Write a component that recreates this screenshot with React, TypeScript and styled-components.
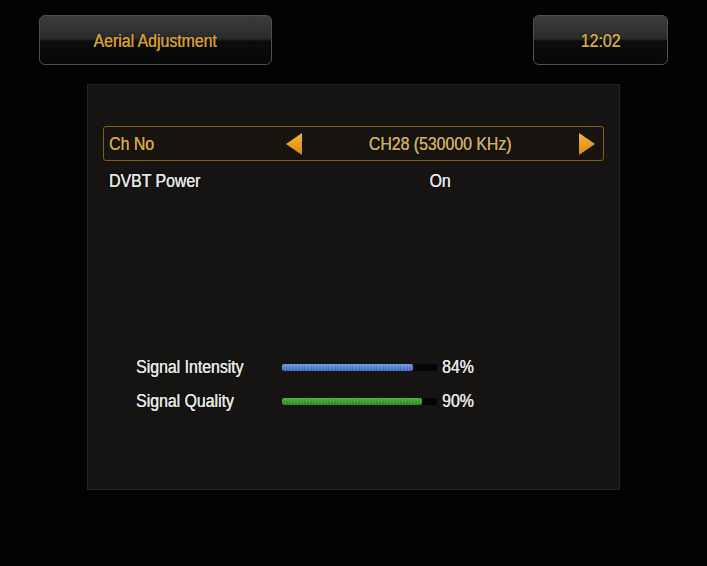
import styled, { createGlobalStyle } from "styled-components";

const GlobalStyle = createGlobalStyle`
  html, body {
    margin: 0;
    padding: 0;
    background: #000;
  }
  body {
    font-family: "Liberation Sans", Arial, sans-serif;
  }
`;

const Screen = styled.div`
  width: 707px;
  height: 566px;
  background: #020202;
  display: flex;
  flex-direction: column;
  overflow: hidden;
`;

const Header = styled.div`
  display: flex;
  justify-content: space-between;
  padding: 15px 39px 0 39px;
`;

const GlossButton = styled.div<{ $w: number }>`
  width: ${(p) => p.$w}px;
  height: 50px;
  box-sizing: border-box;
  border: 1px solid #4f4f4f;
  border-radius: 6px;
  background: linear-gradient(
    to bottom,
    #3c3c3c 0%,
    #2a2a2a 48%,
    #0c0c0c 52%,
    #070707 100%
  );
  display: flex;
  align-items: center;
  justify-content: center;
  padding-top: 2px;
`;

const Txt = styled.span<{ $color?: string; $origin?: string }>`
  display: inline-block;
  font-size: 18px;
  line-height: 20px;
  white-space: nowrap;
  color: ${(p) => p.$color || "#e6e6e6"};
  transform: scaleX(0.88);
  transform-origin: ${(p) => p.$origin || "left center"};
  text-shadow: 0.4px 0 0 ${(p) => p.$color || "#e6e6e6"}, 0 0 2px rgba(0, 0, 0, 0.9);
`;

const Panel = styled.div`
  margin: 19px 0 0 87px;
  width: 533px;
  height: 406px;
  box-sizing: border-box;
  background: #151412;
  border: 1px solid #232220;
  padding: 41px 15px 0 15px;
  display: flex;
  flex-direction: column;
`;

const OptionRow = styled.div<{ $active?: boolean }>`
  height: 35px;
  box-sizing: border-box;
  border: 1px solid ${(p) => (p.$active ? "#7d5d1c" : "transparent")};
  border-radius: 3px;
  background: ${(p) => (p.$active ? "#17140f" : "transparent")};
  display: grid;
  grid-template-columns: 176px 18px 1fr 18px;
  align-items: center;
  padding: ${(p) => (p.$active ? "0" : "4px")} 7px 0 5px;
`;

const Cell = styled.div`
  display: flex;
  justify-content: center;
`;

const Arrow = styled.svg`
  width: 18px;
  height: 22px;
  display: block;
`;

const SignalBlock = styled.div`
  margin-top: 154px;
  padding-left: 33px;
  display: flex;
  flex-direction: column;
`;

const SignalRow = styled.div`
  height: 34px;
  display: grid;
  grid-template-columns: 141px 155px auto;
  column-gap: 5px;
  align-items: center;
`;

const Track = styled.div`
  height: 7px;
  background: #050505;
  display: flex;
`;

const Fill = styled.div<{ $top: string; $bottom: string }>`
  height: 100%;
  border-radius: 2px;
  background:
    repeating-linear-gradient(
      to right,
      rgba(255, 255, 255, 0.12) 0 1px,
      rgba(0, 0, 0, 0) 1px 3px
    ),
    linear-gradient(to bottom, ${(p) => p.$top}, ${(p) => p.$bottom});
`;

const LeftArrow = () => (
  <Arrow viewBox="0 0 18 22">
    <defs>
      <linearGradient id="ag1" x1="0" y1="0" x2="0" y2="1">
        <stop offset="0" stopColor="#f6b632" />
        <stop offset="1" stopColor="#d88a10" />
      </linearGradient>
    </defs>
    <polygon points="17,0 17,22 1,11" fill="url(#ag1)" />
  </Arrow>
);

const RightArrow = () => (
  <Arrow viewBox="0 0 18 22">
    <defs>
      <linearGradient id="ag2" x1="0" y1="0" x2="0" y2="1">
        <stop offset="0" stopColor="#f6b632" />
        <stop offset="1" stopColor="#d88a10" />
      </linearGradient>
    </defs>
    <polygon points="1,0 1,22 17,11" fill="url(#ag2)" />
  </Arrow>
);

const signals = [
  { label: "Signal Intensity", value: 84.5, text: "84%", top: "#6f98e4", bottom: "#3a66b8" },
  { label: "Signal Quality", value: 90, text: "90%", top: "#4cb03a", bottom: "#2a8222" },
];

export default function App() {
  return (
    <Screen>
      <GlobalStyle />
      <Header>
        <GlossButton $w={233}>
          <Txt $color="#d69c2e" $origin="center">Aerial Adjustment</Txt>
        </GlossButton>
        <GlossButton $w={135}>
          <Txt $color="#d3a646" $origin="center">12:02</Txt>
        </GlossButton>
      </Header>
      <Panel>
        <OptionRow $active>
          <Txt $color="#d9a63c">Ch No</Txt>
          <LeftArrow />
          <Cell>
            <Txt $color="#cfab58" $origin="center">CH28 (530000 KHz)</Txt>
          </Cell>
          <RightArrow />
        </OptionRow>
        <OptionRow>
          <Txt>DVBT Power</Txt>
          <span />
          <Cell>
            <Txt $origin="center">On</Txt>
          </Cell>
          <span />
        </OptionRow>
        <SignalBlock>
          {signals.map((s) => (
            <SignalRow key={s.label}>
              <Txt>{s.label}</Txt>
              <Track>
                <Fill $top={s.top} $bottom={s.bottom} style={{ width: `${s.value}%` }} />
              </Track>
              <Txt>{s.text}</Txt>
            </SignalRow>
          ))}
        </SignalBlock>
      </Panel>
    </Screen>
  );
}
